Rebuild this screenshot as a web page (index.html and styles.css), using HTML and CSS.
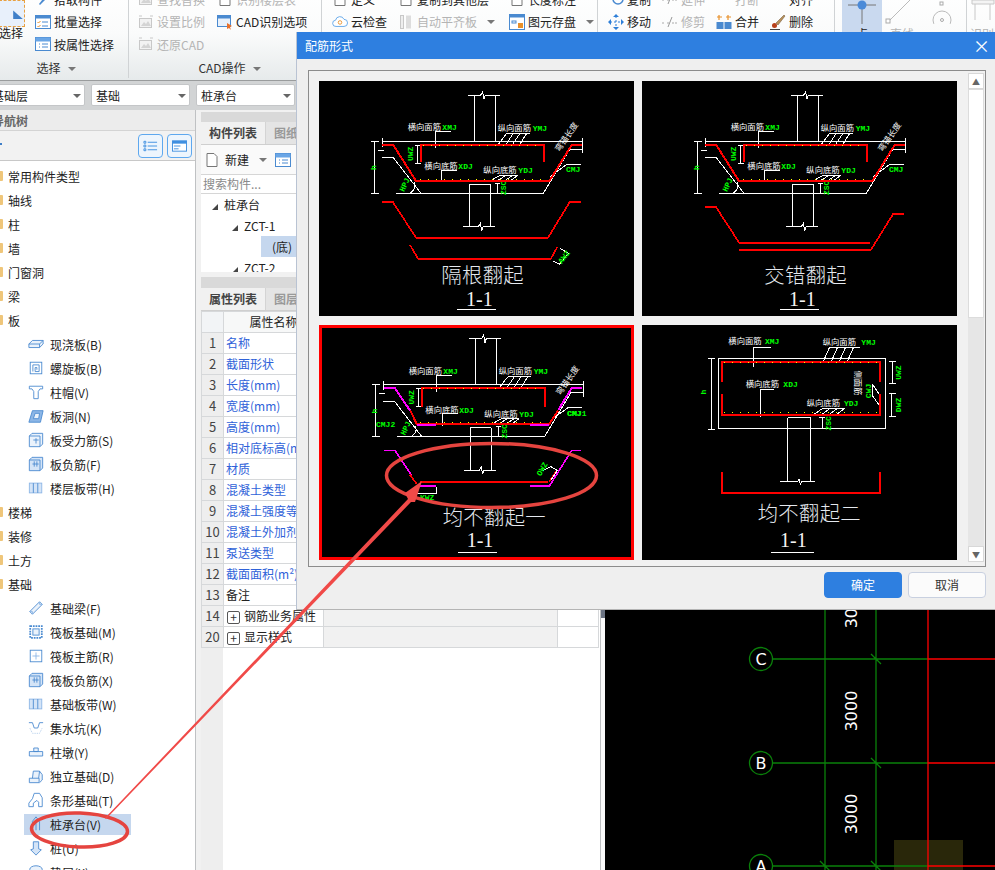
FILE: index.html
```html
<!DOCTYPE html>
<html lang="zh-CN">
<head>
    <meta charset="UTF-8">
    <title>配筋形式</title>
    <link rel="stylesheet" href="styles.css">
</head>
<body>
<!-- icon sprite -->
<svg class="sprite" xmlns="http://www.w3.org/2000/svg">
    <defs>
        <symbol id="i-batch" viewBox="0 0 16 16"><rect x=".5" y="1.5" width="15" height="13" fill="#fff" stroke="#4a8ad0"/><rect x=".5" y="1.5" width="15" height="3" fill="#4a8ad0"/><path d="M2.5 8l1 1 2-2M2.5 12l1 1 2-2" stroke="#e8902a" fill="none"/><path d="M7 8h6M7 12h6" stroke="#4a8ad0"/></symbol>
        <symbol id="i-attr" viewBox="0 0 16 16"><rect x=".5" y="1.5" width="15" height="13" fill="#fff" stroke="#4a8ad0"/><rect x=".5" y="1.5" width="15" height="4" fill="#6aa6e6"/><path d="M4 8h1M4 11h1M7 8h6M7 11h6" stroke="#4a8ad0"/></symbol>
        <symbol id="i-pick" viewBox="0 0 16 16"><path d="M4 13l7-9 2 2-8 8z" fill="#4a8ad0"/></symbol>
        <symbol id="i-grey" viewBox="0 0 16 16"><rect x="1.5" y="4.5" width="12" height="9" fill="#f2f2f2" stroke="#c8c8c8"/><path d="M3 12l3-4 2 2 2-3 3 5z" fill="#d4d4d4"/><path d="M1 2h3M12 2h3" stroke="#c8c8c8"/></symbol>
        <symbol id="i-cad" viewBox="0 0 16 16"><rect x=".5" y="1.5" width="13" height="11" fill="#e8f1fb" stroke="#4a8ad0"/><rect x=".5" y="1.5" width="13" height="3" fill="#4a8ad0"/><path d="M10 9l5 3-2 1 1 3-2-2-2 1z" fill="#e8702a"/></symbol>
        <symbol id="i-cloud" viewBox="0 0 18 16"><path d="M4.5 13a3.5 3.5 0 0 1-.5-7 5 5 0 0 1 9.500-1 4 4 0 0 1 0 8z" fill="#fff" stroke="#5ca4e8"/><circle cx="9" cy="8.500" r="2" fill="none" stroke="#e8902a"/></symbol>
        <symbol id="i-align" viewBox="0 0 16 16"><rect x="2.500" y="1.500" width="3" height="13" fill="#eee" stroke="#c8c8c8"/><rect x="8" y="1.500" width="5" height="13" fill="#ddd"/></symbol>
        <symbol id="i-save" viewBox="0 0 16 16"><rect x=".5" y=".5" width="15" height="15" fill="#fff" stroke="#4a8ad0"/><rect x=".5" y=".5" width="15" height="3" fill="#4a8ad0"/><rect x="3" y="7" width="4" height="2" fill="none" stroke="#4a8ad0"/><rect x="9" y="9" width="5" height="5" fill="#e8902a"/></symbol>
        <symbol id="i-page" viewBox="0 0 16 16"><path d="M3 1.500h7l3 3v10H3z" fill="#fff" stroke="#777"/></symbol>
        <symbol id="i-move" viewBox="0 0 16 16"><path d="M8 2v12M2 8h12" stroke="#2e7fd8" stroke-dasharray="2 2"/><path d="M8 0l3 3H5zM8 16l3-3H5zM0 8l3-3v6zM16 8l-3-3v6z" fill="#2e7fd8"/></symbol>
        <symbol id="i-copy" viewBox="0 0 16 16"><circle cx="10" cy="8" r="5" fill="none" stroke="#4a8ad0" stroke-width="1.500"/></symbol>
        <symbol id="i-trim" viewBox="0 0 16 16"><path d="M0 9h3M5 9h2M10 9h6" stroke="#aaa" stroke-dasharray="2 1"/><path d="M6 13l4-10" stroke="#999"/></symbol>
        <symbol id="i-merge" viewBox="0 0 16 16"><rect x=".5" y="8" width="7" height="7" fill="#4a8ad0"/><rect x="8.500" y="8" width="7" height="7" fill="#4a8ad0"/><path d="M3 1v5M1 3h5M12 1v5M10 3h5" stroke="#e8902a" stroke-width="1.200"/></symbol>
        <symbol id="i-del" viewBox="0 0 16 16"><path d="M14 1l1 1-7 9-2-2z" fill="#b8905a" stroke="#6a5030" stroke-width=".5"/><circle cx="4.500" cy="11.500" r="2.500" fill="#b8401a"/><path d="M0 15.500h10" stroke="#444"/></symbol>
        <symbol id="i-grey2" viewBox="0 0 16 16"><rect x="1" y="1" width="6" height="6" fill="#ddd"/><rect x="9" y="1" width="6" height="6" fill="#ddd"/></symbol>
        <symbol id="i-blue2" viewBox="0 0 16 16"><rect x="1" y="0" width="14" height="8" fill="#4a8ad0"/></symbol>
        <symbol id="t-slab" viewBox="0 0 18 18"><path d="M1 9l4-4h12v4l-4 4H1z" fill="#eaf2fb" stroke="#4a8ad0"/><path d="M1 9h12l4-4M13 9v4" fill="none" stroke="#4a8ad0"/></symbol>
        <symbol id="t-spiral" viewBox="0 0 18 18"><rect x="2.500" y="2.500" width="13" height="13" fill="none" stroke="#4a8ad0"/><path d="M5.500 13V5.500h7V13H8V8.500h2V11" fill="none" stroke="#4a8ad0"/></symbol>
        <symbol id="t-cap" viewBox="0 0 18 18"><path d="M1.500 2.500h15v3h-3l-2 3v8h-5v-8l-2-3h-3z" fill="#fff" stroke="#4a8ad0"/></symbol>
        <symbol id="t-hole" viewBox="0 0 18 18"><path d="M1 16l4-13h12l-3 13z" fill="#8cb6e6" stroke="#4a8ad0"/><path d="M6 12l2-6h5l-1 6z" fill="#eaf2fb" stroke="#4a8ad0"/></symbol>
        <symbol id="t-bar" viewBox="0 0 18 18"><path d="M1.500 4.500l3-3h12v12l-3 3h-12z" fill="#eaf2fb" stroke="#4a8ad0"/><path d="M1.500 4.500h12v12M6 9h6M9 7v6" fill="none" stroke="#4a8ad0"/></symbol>
        <symbol id="t-neg" viewBox="0 0 18 18"><path d="M1.500 4.500l3-3h12v12l-3 3h-12z" fill="#d4e4f7" stroke="#4a8ad0"/><path d="M1.500 4.500h12v12M7 6v6M10 6v6M5 9h7" fill="none" stroke="#4a8ad0"/></symbol>
        <symbol id="t-band" viewBox="0 0 18 18"><rect x="1.500" y="3.500" width="14" height="11" fill="#d4e4f7" stroke="#8cb6e6"/><path d="M6 3.500v11M11 3.500v11" stroke="#4a8ad0"/></symbol>
        <symbol id="t-beam" viewBox="0 0 18 18"><path d="M2 13L13 2l3 3L5 16z" fill="#eaf2fb" stroke="#4a8ad0"/><path d="M2 13l3 0v3M13 2l0 3h3" fill="none" stroke="#8cb6e6"/></symbol>
        <symbol id="t-raft" viewBox="0 0 18 18"><rect x="2.500" y="2.500" width="13" height="13" fill="none" stroke="#4a8ad0" stroke-width="2" stroke-dasharray="2 1"/><rect x="5.500" y="5.500" width="7" height="7" fill="#eaf2fb" stroke="#4a8ad0"/></symbol>
        <symbol id="t-main" viewBox="0 0 18 18"><rect x="2.500" y="2.500" width="13" height="13" fill="#fff" stroke="#4a8ad0"/><path d="M9 5v8M5 9h8" stroke="#8cb6e6"/></symbol>
        <symbol id="t-pit" viewBox="0 0 18 18"><path d="M1 3h4l2 6h4l2-6h4" fill="none" stroke="#4a8ad0"/><path d="M2 9l3 6h8l3-6" fill="none" stroke="#aac8ea" stroke-dasharray="1 1"/></symbol>
        <symbol id="t-pier" viewBox="0 0 18 18"><path d="M6.500 4.500h5v4h-5zM1.500 8.500h15v5h-15z" fill="#eaf2fb" stroke="#4a8ad0"/></symbol>
        <symbol id="t-found" viewBox="0 0 18 18"><path d="M1.500 11.500h11v5h-11zM5 11.500l1-8h7l-1 8M13 3.500l3 4v6l-3 3" fill="#eaf2fb" stroke="#4a8ad0"/></symbol>
        <symbol id="t-strip" viewBox="0 0 18 18"><path d="M1 16.500v-4l4-5 2-6h6l3 5v10h-4v-5l-2-2-4 3v4z" fill="#fff" stroke="#4a8ad0"/></symbol>
        <symbol id="t-cap2" viewBox="0 0 18 18"><path d="M5 16V6l4-5 4 5v10" fill="#c5d7ee" stroke="#4a8ad0"/><path d="M9 6v10" stroke="#4a8ad0"/></symbol>
        <symbol id="t-pile" viewBox="0 0 18 18"><path d="M6 2h6v8l3 1-6 6-6-6 3-1z" fill="#d4e4f7" stroke="#4a8ad0"/></symbol>
        <symbol id="t-cushion" viewBox="0 0 18 18"><ellipse cx="9" cy="6" rx="7" ry="4" fill="#eaf2fb" stroke="#4a8ad0"/></symbol>
        <!-- the foundation section shared by the first three drawings -->
        <symbol id="cad-base" viewBox="27 18 945 705" overflow="visible">
            <path class="l" d="M493 60V198M556 60V198M475 60H512l6-10 4 22 4-12H570M216 198H818M216 188V215M818 188V235M204 225H222M216 248H250L333 355M258 355H700L780 222H818M720 305L770 268H812"/>
            <path class="l" d="M194 198V355M184 198H206M184 355H206M322 210V265M314 210H332M314 265H332M376 220V170H424M660 175H590M562 212L590 175M585 212L610 175M605 212L630 175M627 212L650 175"/>
            <path class="l" d="M395 322V285H440M625 300H572M540 318L572 300M560 318L590 300M583 318L610 300M600 318L625 300M478 328V455M541 328V455M478 328H541M460 455H505l6-10 4 22 4-12H556M562 325V355M555 325H570M300 355Q322 340 312 322"/>
            <text class="w" x="293" y="165">横向面筋</text><text class="g" x="397" y="165">XMJ</text>
            <text class="w" x="563" y="167">纵向面筋</text><text class="g" x="668" y="167">YMJ</text>
            <text class="w" x="343" y="282">横向底筋</text><text class="g" x="445" y="282">XDJ</text>
            <text class="w" x="520" y="294">纵向底筋</text><text class="g" x="625" y="294">YDJ</text>
            <text class="g" x="768" y="292">CMJ</text>
            <text class="g" transform="translate(199 285) rotate(-90)">h</text>
            <text class="g" transform="translate(308 258) rotate(-90)">UWZ</text>
            <text class="g" transform="translate(587 360) rotate(-90)">ZSC</text>
            <text class="g" transform="translate(282 352) rotate(-65)">HPJ</text>
            <text class="w" transform="translate(748 232) rotate(-55)">弯锚长度</text>
        </symbol>
    </defs>
</svg>

<div class="app">
    <!-- ribbon -->
    <div class="ribbon">
        <div class="rb-group rb-select">
            <div class="rb-body">
                <div class="big-select">
                    <div class="big-select-icon"><svg viewBox="0 0 10 16"><path d="M1 6l8 7H1z" fill="#3f7fc8"/></svg></div>
                    <span>选择</span>
                </div>
                <div class="rb-col">
                    <span class="tool"><svg class="ic"><use href="#i-pick"/></svg>拾取构件</span>
                    <span class="tool"><svg class="ic"><use href="#i-batch"/></svg>批量选择</span>
                    <span class="tool"><svg class="ic"><use href="#i-attr"/></svg>按属性选择</span>
                </div>
            </div>
            <div class="rb-label">选择<i class="caret"></i></div>
        </div>
        <div class="rb-group rb-cad">
            <div class="rb-grid">
                <span class="tool off"><svg class="ic"><use href="#i-grey"/></svg>查找替换</span>
                <span class="tool off"><svg class="ic"><use href="#i-page"/></svg>识别楼层表</span>
                <span class="tool off"><svg class="ic"><use href="#i-grey"/></svg>设置比例</span>
                <span class="tool"><svg class="ic"><use href="#i-cad"/></svg>CAD识别选项</span>
                <span class="tool off"><svg class="ic"><use href="#i-grey"/></svg>还原CAD</span>
            </div>
            <div class="rb-label">CAD操作<i class="caret"></i></div>
        </div>
        <div class="rb-group rb-general">
            <div class="rb-grid">
                <span class="tool"><svg class="ic"><use href="#i-page"/></svg>定义</span>
                <span class="tool"><svg class="ic"><use href="#i-page"/></svg>复制到其他层</span>
                <span class="tool"><svg class="ic"><use href="#i-page"/></svg>长度标注</span>
                <span class="tool"><svg class="ic"><use href="#i-cloud"/></svg>云检查</span>
                <span class="tool off"><svg class="ic"><use href="#i-align"/></svg>自动平齐板<i class="caret"></i></span>
                <span class="tool"><svg class="ic"><use href="#i-save"/></svg>图元存盘<i class="caret"></i></span>
            </div>
        </div>
        <div class="rb-group rb-edit">
            <div class="rb-grid">
                <span class="tool"><svg class="ic"><use href="#i-copy"/></svg>复制</span>
                <span class="tool off"><svg class="ic"><use href="#i-trim"/></svg>延伸</span>
                <span class="tool off"><svg class="ic"><use href="#i-grey2"/></svg>打断</span>
                <span class="tool"><svg class="ic"><use href="#i-blue2"/></svg>对齐</span>
                <span class="tool"><svg class="ic"><use href="#i-move"/></svg>移动</span>
                <span class="tool off"><svg class="ic"><use href="#i-trim"/></svg>修剪</span>
                <span class="tool"><svg class="ic"><use href="#i-merge"/></svg>合并</span>
                <span class="tool"><svg class="ic"><use href="#i-del"/></svg>删除</span>
            </div>
        </div>
        <div class="rb-group rb-draw">
            <div class="draw-btn active">
                <svg class="draw-ic" viewBox="0 0 40 36"><path d="M6 17h28M20 17v19" stroke="#777"/><circle cx="20" cy="17" r="4.500" fill="#4a8ad8"/></svg>
                <span class="draw-name">点</span>
            </div>
            <div class="draw-btn off">
                <svg class="draw-ic" viewBox="0 0 40 36"><path d="M7 33L33 7" stroke="#bbb"/><rect x="4" y="31" width="4" height="4" fill="#fff" stroke="#aaa"/></svg>
                <span class="draw-name">直线</span>
            </div>
            <div class="draw-btn narrow off">
                <svg class="draw-ic" viewBox="0 0 30 36"><circle cx="15" cy="32" r="9" fill="none" stroke="#bbb"/><circle cx="15" cy="32" r="1.500" fill="none" stroke="#aaa"/><rect x="13" y="14" width="3" height="3" fill="#fff" stroke="#aaa"/></svg>
            </div>
        </div>
        <div class="rb-group rb-last">
            <svg class="draw-ic" viewBox="0 0 30 36"><path d="M2 12h22v4H2zM5 16v16M20 16v16" fill="#f4f4f4" stroke="#c8c8c8"/><path d="M26 26l6 4-6 4z" fill="#ccc"/></svg>
            <span class="draw-name off">识别</span>
        </div>
    </div>

    <!-- floor / type selectors -->
    <div class="selectors">
        <div class="sel sel-floor">基础层<i class="caret"></i></div>
        <div class="sel">基础<i class="caret"></i></div>
        <div class="sel">桩承台<i class="caret"></i></div>
    </div>

    <div class="main">
        <!-- navigation tree -->
        <div class="nav">
            <div class="nav-title">导航树</div>
            <div class="nav-tools">
                <i class="nav-dash"></i>
                <span class="nav-btn"><svg viewBox="0 0 16 16"><path d="M1 3h2v2H1zM1 7h2v2H1zM1 11h2v2H1z" fill="none" stroke="#3f8fe0"/><path d="M5 4h10M5 8h10M5 12h10" stroke="#3f8fe0"/></svg></span>
                <span class="nav-btn"><svg viewBox="0 0 16 16"><rect x=".5" y="2.500" width="15" height="11" fill="#fff" stroke="#3f8fe0"/><rect x=".5" y="2.500" width="15" height="3" fill="#3f8fe0"/><path d="M2 8h7M2 11h5" stroke="#3f8fe0"/></svg></span>
            </div>
            <div class="tree">
                <div class="root"><i class="folder"></i>常用构件类型</div>
                <div class="root"><i class="folder"></i>轴线</div>
                <div class="root"><i class="folder"></i>柱</div>
                <div class="root"><i class="folder"></i>墙</div>
                <div class="root"><i class="folder"></i>门窗洞</div>
                <div class="root"><i class="folder"></i>梁</div>
                <div class="root"><i class="folder"></i>板</div>
                <div class="leaf"><span class="leaf-in"><svg class="tic"><use href="#t-slab"/></svg>现浇板(B)</span></div>
                <div class="leaf"><span class="leaf-in"><svg class="tic"><use href="#t-spiral"/></svg>螺旋板(B)</span></div>
                <div class="leaf"><span class="leaf-in"><svg class="tic"><use href="#t-cap"/></svg>柱帽(V)</span></div>
                <div class="leaf"><span class="leaf-in"><svg class="tic"><use href="#t-hole"/></svg>板洞(N)</span></div>
                <div class="leaf"><span class="leaf-in"><svg class="tic"><use href="#t-bar"/></svg>板受力筋(S)</span></div>
                <div class="leaf"><span class="leaf-in"><svg class="tic"><use href="#t-neg"/></svg>板负筋(F)</span></div>
                <div class="leaf"><span class="leaf-in"><svg class="tic"><use href="#t-band"/></svg>楼层板带(H)</span></div>
                <div class="root"><i class="folder"></i>楼梯</div>
                <div class="root"><i class="folder"></i>装修</div>
                <div class="root"><i class="folder"></i>土方</div>
                <div class="root"><i class="folder"></i>基础</div>
                <div class="leaf"><span class="leaf-in"><svg class="tic"><use href="#t-beam"/></svg>基础梁(F)</span></div>
                <div class="leaf"><span class="leaf-in"><svg class="tic"><use href="#t-raft"/></svg>筏板基础(M)</span></div>
                <div class="leaf"><span class="leaf-in"><svg class="tic"><use href="#t-main"/></svg>筏板主筋(R)</span></div>
                <div class="leaf"><span class="leaf-in"><svg class="tic"><use href="#t-neg"/></svg>筏板负筋(X)</span></div>
                <div class="leaf"><span class="leaf-in"><svg class="tic"><use href="#t-band"/></svg>基础板带(W)</span></div>
                <div class="leaf"><span class="leaf-in"><svg class="tic"><use href="#t-pit"/></svg>集水坑(K)</span></div>
                <div class="leaf"><span class="leaf-in"><svg class="tic"><use href="#t-pier"/></svg>柱墩(Y)</span></div>
                <div class="leaf"><span class="leaf-in"><svg class="tic"><use href="#t-found"/></svg>独立基础(D)</span></div>
                <div class="leaf"><span class="leaf-in"><svg class="tic"><use href="#t-strip"/></svg>条形基础(T)</span></div>
                <div class="leaf"><span class="leaf-in selected"><svg class="tic"><use href="#t-cap2"/></svg>桩承台(V)</span></div>
                <div class="leaf"><span class="leaf-in"><svg class="tic"><use href="#t-pile"/></svg>桩(U)</span></div>
                <div class="leaf"><span class="leaf-in"><svg class="tic"><use href="#t-cushion"/></svg>垫层(X)</span></div>
            </div>
        </div>

        <!-- component list + properties -->
        <div class="mid">
            <div class="list-panel">
                <div class="grey-bar"></div>
                <div class="tabs"><span class="tab on">构件列表</span><span class="tab">图纸管理</span></div>
                <div class="list-tools">
                    <svg class="ic"><use href="#i-page"/></svg><span>新建</span><i class="caret"></i>
                    <svg class="ic copy-ic"><use href="#i-attr"/></svg><span>复制</span>
                </div>
                <div class="search">搜索构件...</div>
                <div class="comp-tree">
                    <div class="ct lv0"><i class="tri"></i>桩承台</div>
                    <div class="ct lv1"><i class="tri"></i>ZCT-1</div>
                    <div class="ct lv2">(底)</div>
                    <div class="ct lv1"><i class="tri"></i>ZCT-2</div>
                </div>
            </div>
            <div class="prop-panel">
                <div class="grey-bar tall"></div>
                <div class="tabs"><span class="tab on">属性列表</span><span class="tab">图层管理</span></div>
                <table class="props">
                    <colgroup><col class="c-num"><col class="c-name"><col class="c-val"><col class="c-add"></colgroup>
                    <tr class="head"><td></td><td>属性名称</td><td></td><td></td></tr>
                    <tr><td>1</td><td class="link">名称</td><td></td><td></td></tr>
                    <tr><td>2</td><td class="link">截面形状</td><td></td><td></td></tr>
                    <tr><td>3</td><td class="link">长度(mm)</td><td></td><td></td></tr>
                    <tr><td>4</td><td class="link">宽度(mm)</td><td></td><td></td></tr>
                    <tr><td>5</td><td class="link">高度(mm)</td><td></td><td></td></tr>
                    <tr><td>6</td><td class="link">相对底标高(m)</td><td></td><td></td></tr>
                    <tr><td>7</td><td class="link">材质</td><td></td><td></td></tr>
                    <tr><td>8</td><td class="link">混凝土类型</td><td></td><td></td></tr>
                    <tr><td>9</td><td class="link">混凝土强度等级</td><td></td><td></td></tr>
                    <tr><td>10</td><td class="link">混凝土外加剂</td><td></td><td></td></tr>
                    <tr><td>11</td><td class="link">泵送类型</td><td></td><td></td></tr>
                    <tr><td>12</td><td class="link">截面面积(m²)</td><td></td><td></td></tr>
                    <tr><td>13</td><td>备注</td><td></td><td></td></tr>
                    <tr><td>14</td><td><i class="plus">+</i>钢筋业务属性</td><td class="fill"></td><td></td></tr>
                    <tr><td>20</td><td><i class="plus">+</i>显示样式</td><td class="fill"></td><td></td></tr>
                </table>
                <div class="props-rest"></div>
            </div>
        </div>

        <div class="splitter"><i class="splitter-mark"></i></div>

        <!-- drawing canvas -->
        <div class="canvas">
            <svg viewBox="605 110 390 760" width="390" height="760">
                <rect x="894" y="840" width="69" height="30" fill="#29270a"/>
                <path class="grid-g" d="M825 110V870M876 110V870M773 659H928M773 763H928M773 866H928M871 654l10 10M871 758l10 10M871 861l10 10M820 861l10 10"/>
                <path class="grid-r" d="M928 110V870M928 659H995M928 763H995M928 866H995"/>
                <circle class="axis" cx="761" cy="659" r="11.500"/><text class="axis-t" x="761" y="665">C</text>
                <circle class="axis" cx="761" cy="763" r="11.500"/><text class="axis-t" x="761" y="769">B</text>
                <circle class="axis" cx="761" cy="866" r="11.500"/><text class="axis-t" x="761" y="872">A</text>
                <text class="dim-t" transform="translate(857 608) rotate(-90)">3000</text>
                <text class="dim-t" transform="translate(857 711) rotate(-90)">3000</text>
                <text class="dim-t" transform="translate(857 814) rotate(-90)">3000</text>
            </svg>
        </div>
    </div>

    <!-- dialog -->
    <div class="dialog">
        <div class="dlg-head"><span>配筋形式</span><span class="dlg-x">×</span></div>
        <div class="dlg-body">
            <div class="scroll-box">
                <div class="cad-grid">
                    <div class="cad">
                        <svg viewBox="27 18 945 705">
                            <use href="#cad-base" x="27" y="18" width="945" height="705"/>
                            <path class="r" d="M216 210H250L318 318H718L785 210H815M333 262V210H702V262"/>
                            <path class="y" d="M340 212H700M330 314H705"/>
                            <path class="r thin" d="M216 380H248L318 488H714L780 380H813M300 510L325 552H722L742 516"/>
                            <path class="l" d="M750 520L775 535 748 568 730 558"/>
                            <text class="g" transform="translate(755 568) rotate(-52)">AWZ</text>
                            <text class="title" x="518" y="625">隔根翻起</text>
                            <text class="sect" x="508" y="692">1-1</text>
                            <path class="l" d="M441 703H558"/>
                        </svg>
                    </div>
                    <div class="cad">
                        <svg viewBox="27 18 945 705">
                            <use href="#cad-base" x="27" y="18" width="945" height="705"/>
                            <path class="r" d="M216 210H250L318 318H718L785 210H815M333 262V210H702V262"/>
                            <path class="y" d="M340 212H700M330 314H705"/>
                            <path class="r thin" d="M216 396H249L319 504H711M319 524H714L781 416H813"/>
                            <text class="title" x="518" y="625">交错翻起</text>
                            <text class="sect" x="508" y="692">1-1</text>
                            <path class="l" d="M441 703H558"/>
                        </svg>
                    </div>
                    <div class="cad picked">
                        <svg viewBox="36 24 927 684">
                            <use href="#cad-base" x="30" y="12" width="945" height="705"/>
                            <path class="r" d="M335 258V203H706V258M300 268L320 310H718L745 270"/>
                            <path class="m" d="M222 203H255L300 270M320 312H378M660 312H718M745 268L785 203H815"/>
                            <path class="y" d="M340 205H700M330 306H705"/>
                            <path class="m thin" d="M222 390H255L305 465M330 497H378M660 497H718L785 390H812"/>
                            <path class="r thin" d="M300 463L320 490M330 485H715M718 483L740 450"/>
                            <path class="l" d="M318 515L322 520H378V500M700 450L722 438 742 450 722 480"/>
                            <text class="g" x="198" y="320">CMJ2</text>
                            <text class="g" x="772" y="285">CMJ1</text>
                            <text class="g" x="330" y="537">KWZ</text>
                            <text class="g" transform="translate(692 468) rotate(-60)">OWZ</text>
                            <text class="title" x="553" y="612">均不翻起一</text>
                            <text class="sect" x="510" y="680">1-1</text>
                            <path class="l" d="M445 697H560"/>
                        </svg>
                    </div>
                    <div class="cad">
                        <svg viewBox="6 15 945 702">
                            <path class="l" d="M235 115H735V325H235ZM213 115V326M204 115H224M204 326H224M757 124V190M748 124H768M748 190H768M755 220V287M746 220H767M746 287H767"/>
                            <path class="l" d="M443 292V484M512 292V484M443 292H512M420 484H472l5-8 4 16 4-8H525M340 138V80H392M660 82H568M548 127L568 82M572 127L592 82M596 127L616 82M620 127L640 82"/>
                            <path class="l" d="M361 290V207H402M615 265H545M522 282L545 265M545 282L568 265M568 282L590 265M590 282L612 265M548 292V325M538 292H556M697 190L720 225M697 225L720 258M697 190V225"/>
                            <path class="r" d="M245 185V123H720V185M245 220V284H720V220"/>
                            <path class="y" d="M252 125H718M252 277H718"/>
                            <path class="r" d="M245 455V518H720V455"/>
                            <text class="w" x="265" y="70">横向面筋</text><text class="g" x="375" y="70">XMJ</text>
                            <text class="w" x="548" y="72">纵向面筋</text><text class="g" x="664" y="72">YMJ</text>
                            <text class="w" x="317" y="198">横向底筋</text><text class="g" x="430" y="198">XDJ</text>
                            <text class="w" x="500" y="255">纵向底筋</text><text class="g" x="612" y="255">YDJ</text>
                            <text class="g" transform="translate(197 222) rotate(-90)">h</text>
                            <text class="g" transform="translate(783 178) rotate(-90)">UWZ</text>
                            <text class="g" transform="translate(783 275) rotate(-90)">DWZ</text>
                            <text class="g" transform="translate(573 330) rotate(-90)">ZSC</text>
                            <text class="g" transform="translate(692 233) rotate(-90)">CWJ</text>
                            <text class="w" transform="translate(645 150) rotate(90)">侧面筋</text>
                            <text class="title" x="508" y="600">均不翻起二</text>
                            <text class="sect" x="460" y="680">1-1</text>
                            <path class="l" d="M393 696H522"/>
                        </svg>
                    </div>
                </div>
                <div class="sb">
                    <span class="sb-btn">▲</span>
                    <span class="sb-thumb"></span>
                    <span class="sb-track"></span>
                    <span class="sb-btn">▼</span>
                </div>
            </div>
            <div class="dlg-foot">
                <span class="btn primary">确定</span>
                <span class="btn">取消</span>
            </div>
        </div>
    </div>

    <!-- red hand-drawn marks on top of the screenshot -->
    <svg class="marks" viewBox="0 0 995 870" width="995" height="870">
        <ellipse class="mark" cx="491.500" cy="475.500" rx="105" ry="32"/>
        <ellipse class="mark" cx="79.500" cy="830" rx="48" ry="17" transform="rotate(2 79.500 830)"/>
        <path class="mark-arrow" d="M105 818L408 499 405 493 422 481 415 502 411 502 106 819Z"/>
    </svg>
</div>
</body>
</html>
```

FILE: styles.css
```css
html, body {
    margin: 0;
    padding: 0;
}
body {
    font-family: "Noto Sans CJK SC", "Noto Sans", sans-serif;
    font-size: 12px;
    color: #222;
    background: #fff;
}
i {
    font-style: normal;
}
.sprite {
    display: none;
}
.app {
    position: relative;
    width: 995px;
    height: 870px;
    overflow: hidden;
    display: flex;
    flex-direction: column;
}

/* ribbon */
.ribbon {
    flex: none;
    display: flex;
    height: 93px;
    margin-top: -12px;
    background: linear-gradient(#ffffff, #fafbfb 50%, #e6eaeb);
    border-bottom: 1px solid #9a9c9d;
    box-sizing: border-box;
}
.rb-group {
    flex: none;
    display: flex;
    flex-direction: column;
    box-sizing: border-box;
    border-right: 1px solid #d0d3d5;
    height: 90px;
}
.rb-select { width: 129px; }
.rb-cad { width: 193px; padding-left: 9px; }
.rb-general { width: 276px; padding-left: 10px; }
.rb-edit { width: 237px; padding-left: 10px; }
.rb-draw { width: 132px; padding-left: 7px; display: flex; flex-direction: row; }
.rb-last { flex: 1; border: none; padding-left: 3px; color: #bbb; }
.rb-body {
    display: flex;
    height: 67.500px;
}
.rb-col {
    display: flex;
    flex-direction: column;
}
.rb-grid {
    display: grid;
    height: 67.500px;
    grid-auto-rows: 22.500px;
}
.rb-cad .rb-grid { grid-template-columns: 79px auto; }
.rb-general .rb-grid { grid-template-columns: 66px 111px auto; }
.rb-edit .rb-grid { grid-template-columns: 54px 54px 54px 54px; }
.tool {
    display: flex;
    align-items: center;
    gap: 3px;
    height: 22.500px;
    white-space: nowrap;
}
.ic {
    width: 16px;
    height: 16px;
    flex: none;
}
.off {
    color: #b4b4b4;
}
.big-select {
    width: 36px;
    margin-left: -1px;
    padding-top: 12px;
    line-height: 22px;
}
.big-select-icon {
    width: 26px;
    height: 27px;
    margin-bottom: -5px;
    box-sizing: border-box;
    border: 1px dashed #e8a040;
    border-left: none;
    background: #e8f0fb;
    display: flex;
    justify-content: flex-end;
}
.big-select-icon svg {
    width: 12px;
    height: 24px;
}
.rb-label {
    height: 24px;
    line-height: 24px;
    text-align: center;
    color: #333;
}
.rb-select .rb-label { padding-right: 16px; }
.caret {
    display: inline-block;
    width: 0;
    height: 0;
    margin-left: 7px;
    vertical-align: middle;
    border-left: 4px solid transparent;
    border-right: 4px solid transparent;
    border-top: 4px solid #777;
}
.draw-btn {
    width: 40px;
    height: 44px;
    display: flex;
    flex-direction: column;
    align-items: center;
}
.draw-btn.active { background: #c9d9ef; }
.draw-btn.narrow { width: 30px; margin-left: 5px; }
.draw-ic {
    flex: none;
    width: 40px;
    height: 36px;
}
.rb-last .draw-ic { width: 30px; }
.draw-name {
    height: 11px;
    overflow: hidden;
    line-height: 20px;
}

/* selectors */
.selectors {
    flex: none;
    display: flex;
    gap: 6px;
    height: 29px;
    box-sizing: border-box;
    padding-top: 3px;
    background: #d2d4d5;
}
.sel {
    position: relative;
    width: 99px;
    height: 22px;
    line-height: 21px;
    padding-left: 4px;
    box-sizing: border-box;
    background: #fff;
    border: 1px solid #c4c6c8;
    border-radius: 2px;
}
.sel-floor {
    width: 105px;
    margin-left: -20px;
    padding-left: 11px;
}
.sel .caret {
    position: absolute;
    right: 3px;
    top: 9px;
    border-top-color: #666;
}

/* layout below the selectors */
.main {
    flex: 1;
    min-height: 0;
    display: flex;
}

/* navigation tree */
.nav {
    flex: none;
    width: 196px;
    box-sizing: border-box;
    border-right: 1px solid #bfc1c3;
    display: flex;
    flex-direction: column;
    overflow: hidden;
}
.nav-title {
    height: 21px;
    line-height: 21px;
    box-sizing: border-box;
    padding-left: 0;
    text-indent: -8px;
    color: #666;
    font-weight: bold;
    background: #ececec;
    border-bottom: 1px solid #d4d4d4;
}
.nav-tools {
    flex: none;
    height: 30px;
    box-sizing: border-box;
    display: flex;
    align-items: center;
    gap: 4px;
    padding-right: 3px;
    justify-content: flex-end;
    background: #f2f2f2;
    border-bottom: 1px solid #c8c8c8;
    position: relative;
}
.nav-dash {
    position: absolute;
    left: 0;
    top: 12px;
    width: 2px;
    height: 2px;
    background: #3f7fc8;
}
.nav-btn {
    width: 25px;
    height: 24px;
    box-sizing: border-box;
    padding: 3px 4px;
    background: #edf5fd;
    border: 1px solid #5ea8ef;
    border-radius: 4px;
}
.nav-btn svg {
    display: block;
    width: 15px;
    height: 16px;
}
.tree {
    flex: 1;
    padding-top: 3px;
}
.root,
.leaf {
    height: 24px;
    display: flex;
    align-items: center;
    white-space: nowrap;
}
.folder {
    flex: none;
    width: 8px;
    height: 10px;
    margin-left: -5px;
    margin-right: 5px;
    background: #efc67a;
    border-radius: 1px;
}
.leaf-in {
    display: flex;
    align-items: center;
    gap: 6px;
    width: 107px;
    height: 21px;
    box-sizing: border-box;
    margin-left: 24px;
    padding-left: 4px;
}
.leaf-in.selected {
    background: #c5d7ee;
}
.tic {
    flex: none;
    width: 16px;
    height: 16px;
}

/* component list and property table */
.mid {
    flex: none;
    width: 404px;
    box-sizing: border-box;
    padding: 2px 0 0 5px;
    display: flex;
    flex-direction: column;
    background: #f1f1f1;
}
.list-panel {
    flex: none;
    height: 160px;
    background: #fff;
    overflow: hidden;
}
.grey-bar {
    height: 10px;
    background: #d9d9d9;
}
.grey-bar.tall {
    height: 11px;
}
.tabs {
    display: flex;
    height: 23px;
    box-sizing: border-box;
    background: #e4e4e4;
    border-bottom: 1px solid #cfcfcf;
}
.tab {
    width: 64px;
    line-height: 22px;
    text-align: center;
    color: #999;
    font-weight: bold;
    white-space: nowrap;
}
.tab.on {
    color: #444;
    background: #f1f1f1;
    border-right: 1px solid #d4d4d4;
}
.list-tools {
    height: 30px;
    box-sizing: border-box;
    display: flex;
    align-items: center;
    padding-left: 3px;
    gap: 5px;
    background: #fafafa;
    border-bottom: 1px solid #d6d6d6;
}
.list-tools .caret {
    margin-left: 5px;
}
.copy-ic {
    margin-left: 3px;
}
.search {
    height: 19px;
    line-height: 18px;
    box-sizing: border-box;
    padding-left: 2px;
    color: #8a8a8a;
    border-bottom: 1px solid #d6d6d6;
}
.ct {
    height: 21px;
    line-height: 21px;
    white-space: nowrap;
}
.lv0 { padding-left: 11px; }
.lv1 { padding-left: 31px; }
.lv2 {
    margin-left: 60px;
    padding-left: 11px;
    background: #c5d7ee;
}
.tri {
    display: inline-block;
    width: 0;
    height: 0;
    margin-right: 6px;
    border-left: 6px solid transparent;
    border-bottom: 6px solid #444;
}
.prop-panel {
    flex: 1;
    min-height: 0;
    margin-top: 5px;
    display: flex;
    flex-direction: column;
    background: #fff;
}
.props {
    flex: none;
    width: 397px;
    table-layout: fixed;
    border-collapse: collapse;
}
.c-num { width: 22px; }
.c-name { width: 100px; }
.c-val { width: 234px; }
.c-add { width: 41px; }
.props tr {
    height: 21px;
}
.props td {
    padding: 0 2px;
    border: 1px solid #d6d8da;
    white-space: nowrap;
    overflow: hidden;
    line-height: 20px;
    box-sizing: border-box;
}
.props td:first-child {
    padding: 0;
    text-align: center;
    font-size: 13px;
    color: #444;
    background: #eeeeee;
}
.props .head td {
    text-align: center;
    background: #f7f8f8;
}
.props .head td:first-child {
    background: #f2f4f6;
}
.link {
    color: #2f62d9;
}
.fill {
    background: #f1f1f1;
}
.plus {
    display: inline-block;
    width: 11px;
    height: 11px;
    margin: 0 4px 0 1px;
    line-height: 10px;
    text-align: center;
    vertical-align: -1px;
    color: #333;
    border: 1px solid #555;
    border-radius: 2px;
}
.props-rest {
    flex: 1;
    width: 22px;
    background: #eeeeee;
}

/* splitter between panel and canvas */
.splitter {
    flex: none;
    width: 5px;
    box-sizing: border-box;
    border-left: 1px solid #bdbfc1;
    background: #fafafa;
    padding-top: 500px;
}
.splitter-mark {
    display: block;
    height: 8px;
    background: #6b7382;
}

/* canvas */
.canvas {
    flex: 1;
    background: #000;
    overflow: hidden;
}
.canvas svg {
    display: block;
}
.grid-g {
    stroke: #0a800a;
    stroke-width: 1.300;
    fill: none;
}
.grid-r {
    stroke: #f00;
    stroke-width: 1.300;
    fill: none;
}
.axis {
    stroke: #0a800a;
    stroke-width: 1.300;
    fill: none;
}
.axis-t {
    fill: #fff;
    font-family: "DejaVu Sans", sans-serif;
    font-size: 16px;
    text-anchor: middle;
}
.dim-t {
    fill: #fff;
    font-family: "DejaVu Sans", sans-serif;
    font-size: 16px;
    text-anchor: middle;
}

/* dialog */
.dialog {
    position: absolute;
    left: 296px;
    top: 32px;
    width: 699px;
    height: 578px;
    box-sizing: border-box;
    display: flex;
    flex-direction: column;
    background: #efefef;
    border-left: 1px solid #b9c3d3;
    border-bottom: 1px solid #b4b4b4;
}
.dlg-head {
    flex: none;
    height: 27px;
    display: flex;
    justify-content: space-between;
    align-items: center;
    padding: 0 5px 0 8px;
    background: #2e7fe0;
    color: #fff;
}
.dlg-x {
    font-size: 17px;
    line-height: 20px;
}
.dlg-body {
    flex: 1;
    padding: 11px 9px 0 11px;
}
.scroll-box {
    display: flex;
    justify-content: space-between;
    height: 497px;
    box-sizing: border-box;
    background: #f1f1f1;
    border: 1px solid #8c8c8c;
}
.cad-grid {
    display: grid;
    grid-template-columns: 315px 315px;
    grid-template-rows: 235px 235px;
    gap: 9px 8px;
    padding: 10px 0 0 10px;
}
.cad {
    background: #000;
    box-sizing: border-box;
}
.cad.picked {
    border: 3px solid #f00;
}
.cad svg {
    display: block;
    width: 100%;
    height: 100%;
    shape-rendering: crispEdges;
}
.l {
    fill: none;
    stroke: #fff;
    stroke-width: 3;
}
.r {
    fill: none;
    stroke: #f00;
    stroke-width: 6;
}
.m {
    fill: none;
    stroke: #f0f;
    stroke-width: 6;
}
.thin {
    stroke-width: 5;
}
.y {
    fill: none;
    stroke: #ff0;
    stroke-width: 3;
    stroke-dasharray: 3 21;
}
.w {
    fill: #fff;
    font-size: 25px;
}
.g {
    fill: #0f0;
    font-family: "Liberation Mono", monospace;
    font-size: 24px;
    font-weight: bold;
}
.title {
    fill: #e4e8ee;
    font-size: 61px;
    font-weight: 300;
    text-anchor: middle;
    letter-spacing: 1px;
}
.sect {
    fill: #f4f4f4;
    font-family: "Liberation Serif", serif;
    font-size: 60px;
    text-anchor: middle;
}
.sb {
    flex: none;
    width: 16px;
    margin: 2px 1px 4px 0;
    display: flex;
    flex-direction: column;
    background: #e6e6e6;
}
.sb-btn {
    flex: none;
    height: 16px;
    line-height: 16px;
    text-align: center;
    font-size: 8px;
    color: #666;
    background: #fff;
    border: 1px solid #d8d8d8;
    box-sizing: border-box;
}
.sb-thumb {
    flex: none;
    height: 229px;
    background: #fff;
    border: 1px solid #dcdcdc;
    box-sizing: border-box;
}
.sb-track {
    flex: 1;
}
.dlg-foot {
    display: flex;
    justify-content: flex-end;
    gap: 6px;
    margin-top: 5px;
}
.btn {
    width: 78px;
    height: 26px;
    line-height: 24px;
    text-align: center;
    box-sizing: border-box;
    background: #fbfbfb;
    color: #333;
    border: 1px solid #c8d0e0;
    border-radius: 4px;
}
.btn.primary {
    background: #2e7fe0;
    border-color: #2e7fe0;
    color: #fff;
}

/* annotation marks */
.marks {
    position: absolute;
    left: 0;
    top: 0;
    pointer-events: none;
}
.mark {
    fill: none;
    stroke: #e5443f;
    stroke-width: 3.500;
}
.mark-arrow {
    fill: #f04a48;
}
```
